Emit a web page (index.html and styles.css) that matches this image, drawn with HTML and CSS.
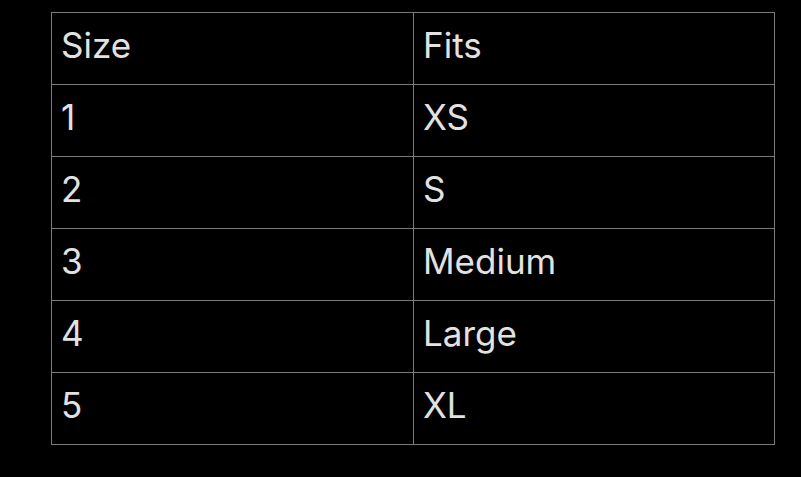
FILE: index.html
```html
<!DOCTYPE html>
<html>
<head>
<meta charset="utf-8">
<link rel="stylesheet" href="styles.css">
</head>
<body>
<table class="size-table">
  <tr><td class="col-a">Size</td><td>Fits</td></tr>
  <tr><td class="col-a">1</td><td>XS</td></tr>
  <tr><td class="col-a">2</td><td>S</td></tr>
  <tr><td class="col-a">3</td><td>Medium</td></tr>
  <tr><td class="col-a">4</td><td>Large</td></tr>
  <tr><td class="col-a">5</td><td>XL</td></tr>
</table>
</body>
</html>
```
FILE: styles.css
```css
html, body {
  margin: 0;
  padding: 0;
  background: #000;
}
body {
  padding: 12px 0 0 51px;
  font-family: Inter, "Liberation Sans", sans-serif;
}
.size-table {
  border-collapse: collapse;
  width: 724px;
  table-layout: fixed;
}
.size-table td {
  border: 1px solid #7a7a7a;
  height: 72px;
  padding: 0 0 7px 9px;
  box-sizing: border-box;
  color: #e2e2e2;
  font-size: 35px;
  line-height: 40px;
  vertical-align: middle;
}
.size-table td.col-a {
  width: 362px;
}
```
